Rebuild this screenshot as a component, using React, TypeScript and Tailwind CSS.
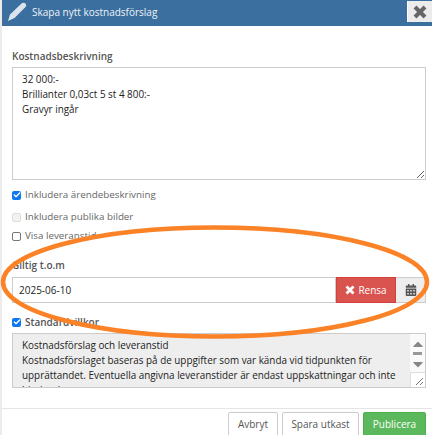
import React from 'react';
import { Check } from 'lucide-react';
import { FaCalendarAlt, FaCaretUp, FaCaretDown } from 'react-icons/fa';

const Box = ({ checked, disabled }: { checked?: boolean; disabled?: boolean }) =>
  checked ? (
    <span className="flex h-[9px] w-[9px] items-center justify-center rounded-[2px] bg-[#0f78f0]">
      <Check size={8} strokeWidth={4} className="text-white" />
    </span>
  ) : (
    <span className={`h-[9px] w-[9px] rounded-[2px] border ${disabled ? 'border-[#ddd] bg-[#f2f2f2]' : 'border-[#777] bg-white'}`} />
  );

const CheckRow = ({ label, checked, disabled, className }: { label: string; checked?: boolean; disabled?: boolean; className?: string }) => (
  <div className={`flex h-[12px] items-center gap-[4px] ${className ?? ''}`}>
    <Box checked={checked} disabled={disabled} />
    <span className="text-[9.8px] leading-[12px] text-[#666]">{label}</span>
  </div>
);

const App = () => {
  return (
    <div className="relative h-[435px] w-[432px] overflow-hidden bg-[#ececec] pl-[2px] font-['Open_Sans',sans-serif]">
      <div className="flex h-[460px] flex-col bg-white">
        <header className="flex h-[26px] items-start justify-between bg-[#3b6f9f] text-white">
          <div className="flex items-center gap-[4px] pt-[2px] pl-[6px]">
            <svg width="20" height="20" viewBox="0 0 20 20">
              <path d="M0 19L2 12.5L13.5 1.5Q15.5 0 17.5 1.5Q19 3.5 17.5 5L6.5 16Z" fill="#dbe5ee" />
            </svg>
            <span className="text-[10px] leading-[16px] text-[#eef3f7]">Skapa nytt kostnadsförslag</span>
          </div>
          <button className="mt-[1px] flex h-[21px] w-[25px] items-center justify-center border-l border-white bg-[#ececec]">
            <svg width="16" height="14" viewBox="0 0 16 14">
              <path d="M3 2L13 12M13 2L3 12" stroke="#666" strokeWidth="4" />
            </svg>
          </button>
        </header>

        <div className="flex flex-col px-[10px] pt-[24px]">
          <label className="text-[10px] leading-[12px] font-semibold text-[#555]">Kostnadsbeskrivning</label>
          <div className="relative mt-[5px] h-[113px] w-[414px] border border-[#ccc] px-[9px] py-[4px] text-[9.9px] leading-[15px] text-[#222]">
            <div>32 000:-</div>
            <div>Brillianter 0,03ct 5 st 4 800:-</div>
            <div>Gravyr ingår</div>
            <svg className="absolute right-0 bottom-0" width="9" height="9" viewBox="0 0 9 9">
              <path d="M1 8L8 1M5 8L8 5" stroke="#666" strokeWidth="1" />
            </svg>
          </div>

          <CheckRow label="Inkludera ärendebeskrivning" checked className="mt-[9px]" />
          <CheckRow label="Inkludera publika bilder" disabled className="mt-[10px]" />
          <CheckRow label="Visa leveranstid" className="mt-[7px]" />

          <label className="mt-[17px] text-[10px] leading-[12px] font-semibold text-[#555]">Giltig t.o.m</label>
          <div className="mt-[6px] flex h-[26px] w-[414px]">
            <div className="flex flex-1 items-center border border-[#ccc] pl-[6px] text-[10px] text-[#222]">2025-06-10</div>
            <div className="flex w-[60px] items-center justify-center gap-[3px] border border-[#d43f3a] bg-[#d9534f] text-[10px] text-white">
              <svg width="10" height="10" viewBox="0 0 10 10">
                <path d="M1.5 1.5L8.5 8.5M8.5 1.5L1.5 8.5" stroke="#fff" strokeWidth="2.8" />
              </svg>
              Rensa
            </div>
            <div className="flex w-[30px] items-center justify-center border border-l-0 border-[#ccc] bg-[#eee] text-[#555]">
              <FaCalendarAlt size={12} />
            </div>
          </div>

          <div className="mt-[13px] flex h-[12px] items-center gap-[4px]">
            <Box checked />
            <span className="text-[10px] leading-[12px] font-semibold text-[#555]">Standardvillkor</span>
          </div>

          <div className="relative mt-[5px] h-[55px] w-[414px] overflow-hidden border border-[#ccc] bg-[#eee] pt-[4px] pr-[16px] pl-[9px] text-[9.9px] leading-[15px] text-[#222]">
            <div>Kostnadsförslag och leveranstid</div>
            <div>Kostnadsförslaget baseras på de uppgifter som var kända vid tidpunkten för upprättandet. Eventuella angivna leveranstider är endast uppskattningar och inte bindande.</div>
            <div className="absolute top-0 right-0 flex h-full w-[15px] flex-col items-center bg-[#fafafa] text-[#888]">
              <FaCaretUp size={16} className="mt-[2px] -mb-[3px]" />
              <span className="mt-[3px] h-[3px] w-[9px] bg-[#999]" />
              <FaCaretDown size={16} className="mt-[1px]" />
            </div>
            <div className="absolute right-0 bottom-0 h-[15px] w-[15px] border-t border-l border-[#ddd] bg-white">
              <svg width="14" height="14" viewBox="0 0 14 14">
                <path d="M5 12L12 5M9 12L12 9" stroke="#777" strokeWidth="1" />
              </svg>
            </div>
          </div>
        </div>

        <footer className="mt-[20px] flex justify-end gap-[4px] border-t border-[#e5e5e5] pt-[3px] pr-[6px]">
          <button className="h-[30px] w-[50px] rounded-[2px] border border-[#ccc] bg-white pb-[6px] text-[10px] text-[#555]">Avbryt</button>
          <button className="h-[30px] w-[77px] rounded-[2px] border border-[#ccc] bg-white pb-[6px] text-[10px] text-[#555]">Spara utkast</button>
          <button className="h-[30px] w-[63px] rounded-[2px] border border-[#4cae4c] bg-[#5cb85c] pb-[6px] text-[10px] text-white">Publicera</button>
        </footer>
      </div>

      <svg className="pointer-events-none absolute top-0 left-0" width="432" height="435" viewBox="0 0 432 435">
        <ellipse cx="215" cy="282" rx="212" ry="54.5" fill="none" stroke="#fb8226" strokeWidth="4.5" />
      </svg>
    </div>
  );
};

export default App;
